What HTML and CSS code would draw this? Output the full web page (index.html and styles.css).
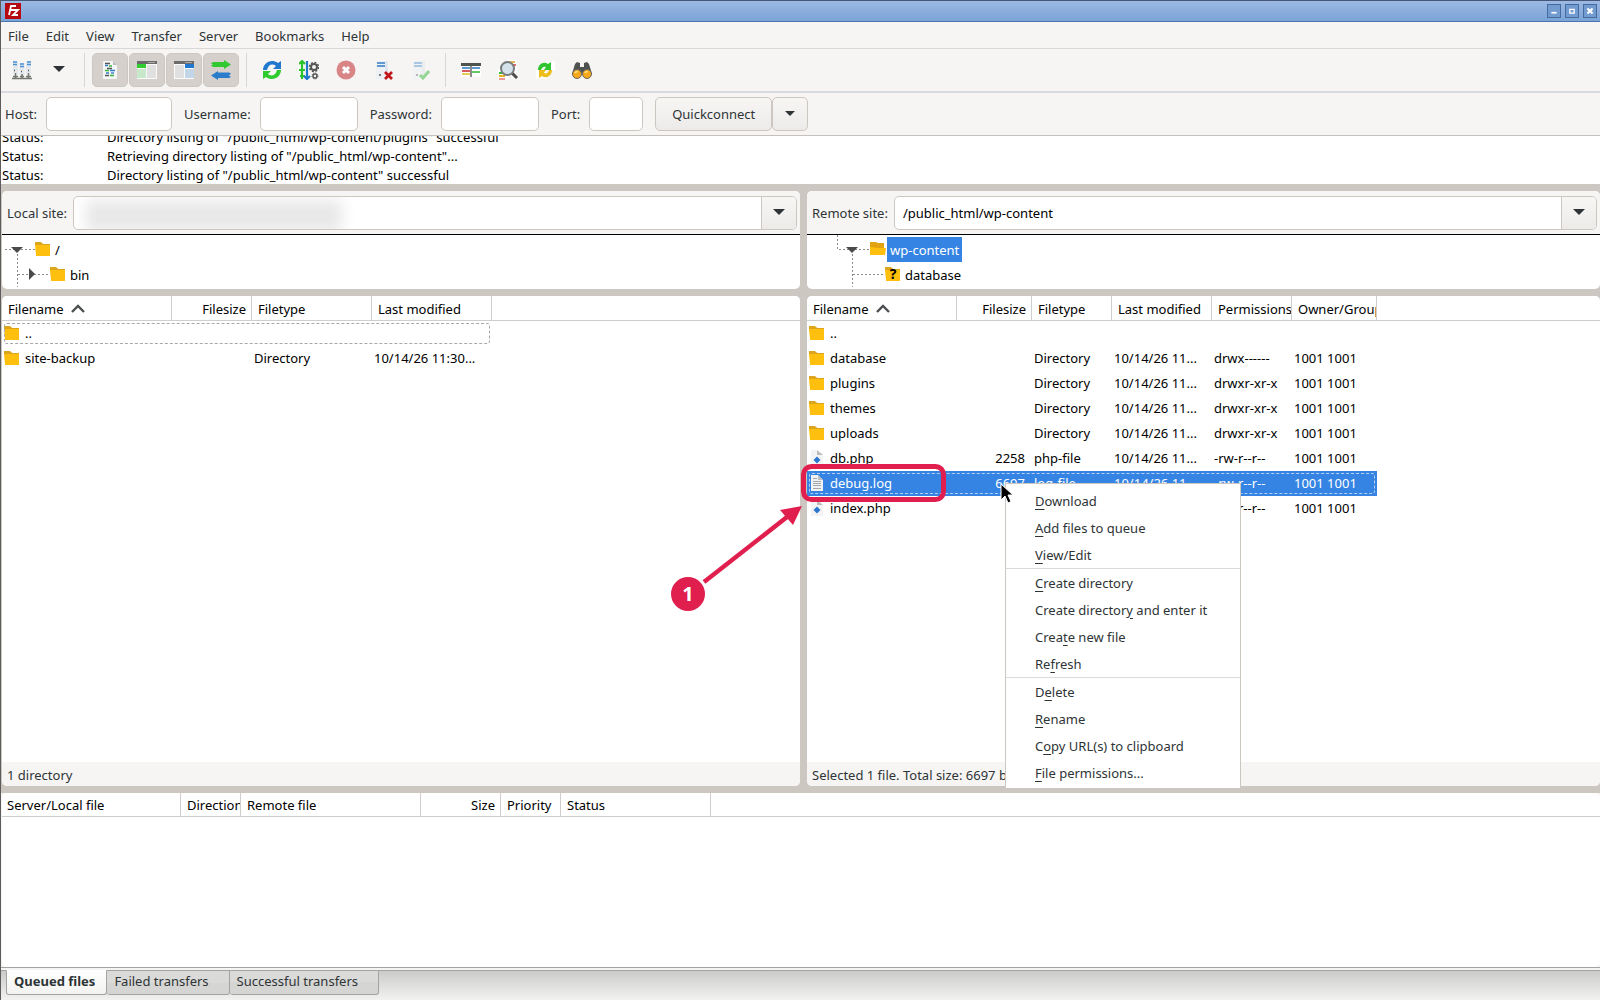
FILE: index.html
```html
<!DOCTYPE html>
<html lang="en">
<head>
<meta charset="utf-8">
<title>FileZilla</title>
<link rel="stylesheet" href="styles.css">
</head>
<body>
<svg class="defs" aria-hidden="true">
  <symbol id="folder" viewBox="0 0 16 16"><path d="M1 15V2h6l1 1h7v12z" fill="#ffbf0f"/><path d="M0 1h6l2 2h7v1H0z" fill="#dca51e"/><path d="M0 4h15v10H1z" fill="#ffbf0f"/></symbol>
  <symbol id="folder-open" viewBox="0 0 16 16"><path d="M0 1h6l2 1h6v6H0z" fill="#e2a310"/><path d="M0 14V6l8 1h8l-1 7z" fill="#ffbf0f"/></symbol>
  <symbol id="php" viewBox="0 0 16 16"><path d="M2 0h6l6 6v10H2z" fill="#f3f4f6"/><path d="M8 0v5h6z" fill="#bcbcb9"/><path d="M8 6.500l3.500 3.500L8 13.500 4.500 10z" fill="#2c77cf"/></symbol>
  <symbol id="log" viewBox="0 0 16 16"><path d="M2 0h7l5 5v11H2z" fill="#f0f1f3"/><path d="M9 0v5h5z" fill="#bcbdbd"/><path d="M4 3.500h4M4 6.500h8M4 8.500h8M4 10.500h8M4 13.500h8" stroke="#a3a8ad"/></symbol>
  <symbol id="caret" viewBox="0 0 12 7"><path d="M0 0h12L6 6z" fill="#2e3436"/></symbol>
  <symbol id="sort" viewBox="0 0 14 9"><path d="M1 8l6-6 6 6" fill="none" stroke="#4b4f50" stroke-width="2.400"/></symbol>
  <symbol id="server" viewBox="0 0 20 20"><path d="M3 1h12v18H3z" fill="#dfe5ea"/><path d="M3 1h9v18H3z" fill="#eef1f4"/><path d="M4 3h8M4 6h8" stroke="#2f7cc9" stroke-width="1.600"/><circle cx="7" cy="15" r="1" fill="#555"/></symbol>
</svg>

<div class="window">
  <header class="titlebar">
    <svg class="logo" viewBox="0 0 16 16"><path d="M0 0h16v16H0z" fill="#b50a10"/><path d="M4 12L6 3h5M5.500 7h4M8 7h5l-5 5h5" fill="none" stroke="#fff" stroke-width="1.800"/></svg>
    <div class="window-buttons">
      <button aria-label="Minimize"><svg viewBox="0 0 14 14"><path d="M4 9h6" stroke="#fff" stroke-width="2"/></svg></button>
      <button aria-label="Maximize"><svg viewBox="0 0 14 14"><path d="M4.500 5h5v4.500h-5z" fill="none" stroke="#fff" stroke-width="1.500"/></svg></button>
      <button aria-label="Close"><svg viewBox="0 0 14 14"><path d="M4 4l6 6M10 4l-6 6" stroke="#fff" stroke-width="2.400"/></svg></button>
    </div>
  </header>

  <nav class="menubar">
    <button>File</button><button>Edit</button><button>View</button><button>Transfer</button><button>Server</button><button>Bookmarks</button><button>Help</button>
  </nav>

  <div class="toolbar">
    <button class="tool" aria-label="Site Manager"><svg viewBox="0 0 20 20"><path d="M1 1h5v13H1zM7.500 3h5v12h-5zM14 1h5v13h-5z" fill="#e3e8ed"/><path d="M1 2h4M1 4.500h4M8 4h4M8 6.500h4M15 2h4M15 4.500h4" stroke="#4b91d3" stroke-width="1.400"/><path d="M3.500 13v5M10 14v4M16.500 13v5M0 18.500h20M1 16.500h5M8 16.500h4M14 16.500h5" stroke="#72766f" stroke-width="1.500"/><path d="M2 10.500h1M9 11.500h1M16 10.500h1" stroke="#555" stroke-width="1.500"/></svg></button>
    <button class="tool" aria-label="Site list"><svg class="caret"><use href="#caret"/></svg></button>
    <span class="rule"></span>
    <button class="tool on" aria-label="Message log"><svg viewBox="0 0 20 20"><path d="M3 1h10l4 4v14H3z" fill="#f4f5f6"/><path d="M13 1v4h4z" fill="#bbb"/><g stroke-width="1.400"><path d="M5 3.500h5M7 8.500h5M5 15.500h4" stroke="#555"/><path d="M5 5.500h3M10 10.500h5M6 13h3" stroke="#2f7cc9"/><path d="M9 6h3M5 10.500h4M10 15.500h4" stroke="#38b637"/><path d="M11 13h3" stroke="#2f7cc9"/></g></svg></button>
    <button class="tool on" aria-label="Local tree"><svg viewBox="0 0 20 20"><path d="M0 1h20v18H0z" fill="#fafafa"/><path d="M0 1h20v3H0z" fill="#6b6b6b"/><path d="M11 2.500h7" stroke="#aaa"/><path d="M0 4h9v4H0z" fill="#30cc30"/><path d="M0 9h9v9H0z" fill="#c8e8cc"/><path d="M10 5h9v13h-9z" fill="#e0e0e0"/></svg></button>
    <button class="tool on" aria-label="Remote tree"><svg viewBox="0 0 20 20"><path d="M0 1h20v18H0z" fill="#fafafa"/><path d="M0 1h20v3H0z" fill="#6b6b6b"/><path d="M11 2.500h7" stroke="#aaa"/><path d="M11 4h9v4h-9z" fill="#2179cf"/><path d="M11 9h9v9h-9z" fill="#c2d6e8"/><path d="M1 5h9v13H1z" fill="#e0e0e0"/></svg></button>
    <button class="tool on" aria-label="Transfer queue"><svg viewBox="0 0 20 20"><path d="M0 3.500l2-1.500H13V0l7 4.500L13 9V7H2L0 5.500 2 4.500z" fill="#32c832"/><path d="M20 13.500l-2-1H7V11l-7 4.500L7 20v-2h11l2-1-2-1.500z" fill="#2b7dcc"/></svg></button>
    <span class="rule"></span>
    <button class="tool" aria-label="Refresh"><svg viewBox="0 0 20 20"><path d="M1 10C1 3 9-2 16 3l3-2v8h-8l3-3C10 3 6 5 5 10z" fill="#2079cd"/><path d="M19 10c0 7-8 12-15 7l-3 2v-8h8l-3 3c4 3 8 1 9-4z" fill="#2ecb2e"/></svg></button>
    <button class="tool" aria-label="Process queue"><svg viewBox="0 0 20 20"><path d="M3 1v18M0 4l3-3 3 3M0 10h6M1 16h5" stroke="#2bc32b" stroke-width="2.200" fill="none"/><path d="M8 1v18M5 16l3 3 3-3" stroke="#2079cd" stroke-width="2.200" fill="none"/><circle cx="15" cy="7" r="3" fill="none" stroke="#555" stroke-width="2"/><circle cx="15" cy="7" r="4.500" fill="none" stroke="#555" stroke-width="1.500" stroke-dasharray="2 1.500"/><circle cx="16" cy="16" r="2" fill="none" stroke="#555" stroke-width="1.500"/><circle cx="16" cy="16" r="3" fill="none" stroke="#555" stroke-dasharray="1 1"/></svg></button>
    <button class="tool" aria-label="Cancel"><svg viewBox="0 0 20 20"><circle cx="10" cy="10" r="9.500" fill="#d98585"/><path d="M7 7l6 6M13 7l-6 6" stroke="#fff" stroke-width="3"/></svg></button>
    <button class="tool" aria-label="Disconnect"><svg viewBox="0 0 20 20"><use href="#server"/><path d="M12 12l7 7M19 12l-7 7" stroke="#c2161c" stroke-width="2.800"/></svg></button>
    <button class="tool" aria-label="Reconnect"><svg class="faded" viewBox="0 0 20 20"><use href="#server"/><path d="M10 15l3 3 6-7" stroke="#36b63b" stroke-width="3" fill="none"/></svg></button>
    <span class="rule"></span>
    <button class="tool" aria-label="Filter"><svg viewBox="0 0 20 20"><path d="M0 3h20v14H0z" fill="#fff"/><path d="M0 3h20v3H0z" fill="#50544f"/><path d="M10 6v11" stroke="#666" stroke-width="1.500"/><path d="M1 8h8" stroke="#2977c5" stroke-width="1.500"/><path d="M1 11h8" stroke="#c9252b" stroke-width="1.500"/><path d="M1 14h8" stroke="#e0b91f" stroke-width="1.500"/><path d="M11 8h8" stroke="#2977c5" stroke-width="1.500"/><path d="M11 12h8" stroke="#31b331" stroke-width="1.500"/></svg></button>
    <button class="tool" aria-label="Directory comparison"><svg viewBox="0 0 20 20"><path d="M10 0h9v12h-9zM0 9h10v11H0z" fill="#fff"/><path d="M11 2h6" stroke="#d89b22" stroke-width="1.500"/><path d="M14 5h4" stroke="#d33" stroke-width="1.500"/><path d="M1 13h4" stroke="#3b3" stroke-width="2"/><path d="M1 16h6" stroke="#e4b21e" stroke-width="2"/><path d="M1 19h6" stroke="#d33"/><path d="M14 13l5 5" stroke="#4b4b4b" stroke-width="3"/><circle cx="9.500" cy="8.500" r="6.500" fill="#d5e1eb" stroke="#777b7c" stroke-width="2"/></svg></button>
    <button class="tool" aria-label="Synchronized browsing"><svg viewBox="0 0 20 20"><path d="M11 1h9v9h-9zM1 10h10v9H1z" fill="#fff"/><path d="M3 10C3 4 9 1 13 4l3-2v8H9l2-3C8 6 7 8 6 10z" fill="#2dc42d"/><path d="M17 10c0 6-6 9-10 6l-3 2v-8h7l-2 3c3 1 4 0 5-3z" fill="#edbd1c"/></svg></button>
    <button class="tool" aria-label="Find files"><svg viewBox="0 0 20 20"><path d="M5 2l3 1v4h4V3l3-1 2 2 3 10-8 1-2-2-2 2-8-1L3 4z" fill="#4e5150"/><circle cx="5" cy="14" r="4.500" fill="#f7a71a" stroke="#666"/><circle cx="15" cy="14" r="4.500" fill="#f7a71a" stroke="#666"/><path d="M3 13a2 2 0 0 1 3-1M13 13a2 2 0 0 1 3-1" stroke="#ffe28a" stroke-width="1.500" fill="none"/></svg></button>
  </div>

  <form class="quickconnect">
    <label for="host">Host:</label><input id="host" class="field wide" type="text">
    <label for="user">Username:</label><input id="user" class="field" type="text">
    <label for="pass">Password:</label><input id="pass" class="field" type="password">
    <label for="port">Port:</label><input id="port" class="field port" type="text">
    <div class="connect"><button type="button" class="btn main">Quickconnect</button><button type="button" class="btn drop" aria-label="Recent servers"><svg class="caret small"><use href="#caret"/></svg></button></div>
  </form>

  <section class="log">
    <p><span>Status:</span>Directory listing of "/public_html/wp-content/plugins" successful</p>
    <p><span>Status:</span>Retrieving directory listing of "/public_html/wp-content"...</p>
    <p><span>Status:</span>Directory listing of "/public_html/wp-content" successful</p>
  </section>

  <main class="sites">
    <section class="site">
      <div class="card top">
        <div class="path"><label for="local">Local site:</label><div class="combo"><input id="local" type="text"><span class="redacted"></span><button aria-label="Local paths"><svg class="caret"><use href="#caret"/></svg></button></div></div>
        <div class="tree">
          <svg class="twigs" viewBox="0 0 60 52"><g fill="none" stroke="#8b8b8b" stroke-dasharray="2 2"><path d="M3 14.500h30M15.500 15v37M16 39.500h32"/></g><path d="M9 12h12l-6 6z" fill="#4a4a4a"/><path d="M27 33v12l6-6z" fill="#4a4a4a"/></svg>
          <div class="node root"><svg class="ico"><use href="#folder"/></svg><span>/</span></div>
          <div class="node child"><svg class="ico"><use href="#folder"/></svg><span>bin</span></div>
        </div>
      </div>
      <div class="card files">
        <div class="list">
          <table class="local">
            <colgroup><col class="w170"><col class="w80"><col class="w120"><col class="w120"></colgroup>
            <thead><tr><th>Filename<svg class="sort"><use href="#sort"/></svg></th><th class="num">Filesize</th><th>Filetype</th><th>Last modified</th></tr></thead>
            <tbody>
              <tr class="focus"><td><svg class="ico"><use href="#folder"/></svg>..</td><td></td><td></td><td></td></tr>
              <tr><td><svg class="ico"><use href="#folder"/></svg>site-backup</td><td></td><td>Directory</td><td>10/14/26 11:30...</td></tr>
            </tbody>
          </table>
        </div>
        <div class="status">1 directory</div>
      </div>
    </section>

    <section class="site">
      <div class="card top">
        <div class="path"><label for="remote">Remote site:</label><div class="combo"><input id="remote" type="text" value="/public_html/wp-content"><button aria-label="Remote paths"><svg class="caret"><use href="#caret"/></svg></button></div></div>
        <div class="tree remote">
          <svg class="twigs" viewBox="0 0 60 52"><g fill="none" stroke="#8b8b8b" stroke-dasharray="2 2"><path d="M.500 0v14.500h33M15.500 15v37M16 39.500h32"/></g><path d="M9 12h12l-6 6z" fill="#4a4a4a"/></svg>
          <div class="node root"><svg class="ico"><use href="#folder-open"/></svg><span class="picked">wp-content</span></div>
          <div class="node child"><span class="unknown"><svg class="ico"><use href="#folder"/></svg><b>?</b></span><span>database</span></div>
        </div>
      </div>
      <div class="card files">
        <div class="list">
          <table class="server">
            <colgroup><col class="w150"><col class="w75"><col class="w80"><col class="w100"><col class="w80"><col class="w85"></colgroup>
            <thead><tr><th>Filename<svg class="sort"><use href="#sort"/></svg></th><th class="num">Filesize</th><th>Filetype</th><th>Last modified</th><th>Permissions</th><th>Owner/Group</th></tr></thead>
            <tbody>
              <tr><td><svg class="ico"><use href="#folder"/></svg>..</td><td></td><td></td><td></td><td></td><td></td></tr>
              <tr><td><svg class="ico"><use href="#folder"/></svg>database</td><td></td><td>Directory</td><td>10/14/26 11...</td><td>drwx------</td><td>1001 1001</td></tr>
              <tr><td><svg class="ico"><use href="#folder"/></svg>plugins</td><td></td><td>Directory</td><td>10/14/26 11...</td><td>drwxr-xr-x</td><td>1001 1001</td></tr>
              <tr><td><svg class="ico"><use href="#folder"/></svg>themes</td><td></td><td>Directory</td><td>10/14/26 11...</td><td>drwxr-xr-x</td><td>1001 1001</td></tr>
              <tr><td><svg class="ico"><use href="#folder"/></svg>uploads</td><td></td><td>Directory</td><td>10/14/26 11...</td><td>drwxr-xr-x</td><td>1001 1001</td></tr>
              <tr><td><svg class="ico"><use href="#php"/></svg>db.php</td><td class="num">2258</td><td>php-file</td><td>10/14/26 11...</td><td>-rw-r--r--</td><td>1001 1001</td></tr>
              <tr class="focus selected"><td><svg class="ico"><use href="#log"/></svg>debug.log</td><td class="num">6697</td><td>log-file</td><td>10/14/26 11...</td><td>-rw-r--r--</td><td>1001 1001</td></tr>
              <tr><td><svg class="ico"><use href="#php"/></svg>index.php</td><td class="num">28</td><td>php-file</td><td>10/14/26 11...</td><td>-rw-r--r--</td><td>1001 1001</td></tr>
            </tbody>
          </table>
        </div>
        <div class="status">Selected 1 file. Total size: 6697 bytes</div>
      </div>

      <div class="context" role="menu">
        <button><u>D</u>ownload</button>
        <button><u>A</u>dd files to queue</button>
        <button><u>V</u>iew/Edit</button>
        <hr>
        <button><u>C</u>reate directory</button>
        <button>Create director<u>y</u> and enter it</button>
        <button>Crea<u>t</u>e new file</button>
        <button>Re<u>f</u>resh</button>
        <hr>
        <button>D<u>e</u>lete</button>
        <button><u>R</u>ename</button>
        <button>C<u>o</u>py URL(s) to clipboard</button>
        <button><u>F</u>ile permissions...</button>
      </div>
      <svg class="pointer" viewBox="0 0 14 22"><path d="M1 1v16l4-4 3 7 3-1.500-3-6.500h5z" fill="#000" stroke="#fff"/></svg>
      <svg class="callout" viewBox="0 0 280 150"><rect x="133.500" y="2.500" width="140" height="33" rx="8" fill="none" stroke="#e01f4f" stroke-width="5"/><path d="M34 118L117 53" stroke="#e01f4f" stroke-width="4.500"/><path d="M132 42l-9 19-13-15z" fill="#e01f4f"/><circle cx="18" cy="130" r="17" fill="#e01f4f"/><text x="18" y="137" text-anchor="middle">1</text></svg>
    </section>
  </main>

  <section class="card queue">
    <table>
      <colgroup><col class="w179"><col class="w60"><col class="w180"><col class="w80"><col class="w60"><col class="w150"></colgroup>
      <thead><tr><th>Server/Local file</th><th>Direction</th><th>Remote file</th><th class="num">Size</th><th>Priority</th><th>Status</th></tr></thead>
    </table>
  </section>

  <footer class="tabs">
    <button class="tab active">Queued files</button><button class="tab">Failed transfers</button><button class="tab">Successful transfers</button>
  </footer>
</div>
</body>
</html>
```
FILE: styles.css
```css
* { box-sizing: border-box; }
body { margin: 0; font: 13px/18px "Noto Sans", sans-serif; color: #2e3436; }
button, input { font: inherit; color: inherit; }
button { margin: 0; padding: 0; border: 0; background: none; }
p { margin: 0; }
svg { display: block; flex: none; }
.defs { position: absolute; width: 0; height: 0; }

.window {
  display: flex;
  flex-direction: column;
  min-height: 100vh;
  border-left: 1px solid #5c5c5c;
  background: #f6f5f4;
  overflow: hidden;
}

.titlebar {
  display: flex;
  align-items: center;
  justify-content: space-between;
  height: 22px;
  padding: 0 3px 0 4px;
  border-top: 1px solid #46587a;
  border-bottom: 1px solid #4a75ae;
  background: linear-gradient(#9db9e4, #7aa3d6);
}
.logo { width: 16px; height: 16px; }
.window-buttons { display: flex; gap: 4px; }
.window-buttons button { width: 14px; height: 14px; border: 1px solid #456a9e; background: #729bd0; }
.window-buttons svg { width: 12px; height: 12px; }

.menubar {
  display: flex;
  align-items: center;
  gap: 17px;
  height: 27px;
  padding: 2px 7px 0;
  border-bottom: 1px solid #d9d8d6;
}

.toolbar {
  display: flex;
  align-items: center;
  gap: 1px;
  height: 44px;
  padding: 0 3px 1px;
  border-bottom: 2px solid #d8dadd;
}
.tool { display: flex; align-items: center; justify-content: center; width: 36px; height: 34px; border-radius: 5px; }
.tool svg { width: 20px; height: 20px; }
.tool.on { background: #d5d0cc; border: 1px solid #cdc7c2; }
.tool svg.caret, .caret { width: 12px; height: 7px; }
.caret.small { width: 10px; height: 6px; }
.faded { opacity: .5; }
.rule { width: 1px; height: 34px; margin: 0 6px; background: #d9d6d3; }

.quickconnect {
  display: flex;
  align-items: center;
  height: 43px;
  padding-left: 4px;
  border-bottom: 1px solid #c4c0bc;
}
.quickconnect label { margin-right: 9px; }
.field { width: 98px; height: 34px; margin-right: 12px; padding: 0 8px; border: 1px solid #cdc7c2; border-radius: 5px; background: #fff; }
.field.wide { width: 126px; }
.field.port { width: 54px; }
.connect { display: flex; }
.btn { height: 34px; border: 1px solid #cdc7c2; border-radius: 5px; background: linear-gradient(#f7f6f5, #edebe9); }
.btn.main { width: 117px; }
.btn.drop { display: flex; align-items: center; justify-content: center; width: 36px; }

.log {
  display: flex;
  flex-direction: column;
  justify-content: flex-end;
  height: 48px;
  padding-left: 1px;
  overflow: hidden;
  background: #fff;
  color: #000;
}
.log p { flex: none; display: flex; height: 19px; padding-top: 1px; line-height: 19px; }
.log span { width: 105px; }

.sites {
  display: grid;
  grid-template-columns: 799fr 793fr;
  gap: 7px;
  flex: 1;
  padding: 7px 0;
  background: #cdc7c2;
}
.site { position: relative; display: flex; flex-direction: column; gap: 7px; min-width: 0; }
.site:first-child { padding-left: 1px; }
.card { border-radius: 5px; background: #fff; overflow: hidden; }
.path { display: flex; align-items: center; gap: 6px; height: 44px; padding: 0 3px 0 5px; border-bottom: 1px solid #000; background: #f6f5f4; }
.combo { position: relative; display: flex; flex: 1; height: 34px; border: 1px solid #cdc7c2; border-radius: 5px; background: #fff; overflow: hidden; }
.combo input { flex: 1; min-width: 0; padding: 0 8px; border: 0; background: none; color: #000; }
.combo button { display: flex; align-items: center; justify-content: center; width: 35px; border-left: 1px solid #cdc7c2; background: linear-gradient(#f7f6f5, #edebe9); }
.redacted { position: absolute; left: 12px; top: 3px; width: 256px; height: 32px; background: #e8e8e8; filter: blur(7px); }

.tree { position: relative; height: 54px; padding-top: 2px; color: #000; }
.remote { padding-left: 30px; }
.twigs { position: absolute; left: 0; top: 0; width: 60px; height: 52px; }
.remote .twigs { left: 30px; }
.node { position: relative; display: flex; align-items: center; gap: 2px; height: 25px; padding-left: 33px; }
.node.child { padding-left: 48px; }
.node span { padding: 2px 3px 0 2px; line-height: 23px; }
.node .ico { margin-bottom: 1px; }
.ico { width: 16px; height: 16px; }
.node .unknown { position: relative; padding: 0; }
.unknown b { position: absolute; inset: 0; font-size: 14px; line-height: 16px; text-align: center; }
.node .picked { padding: 2px 3px 0; margin-left: -1px; background: #3584e4; color: #fff; }

.files { display: flex; flex-direction: column; flex: 1; }
.list { flex: 1; background: linear-gradient(#d0cecc, #d0cecc) 0 24px / 100% 1px no-repeat #fff; }
.status { height: 24px; padding: 4px 5px 2px; background: #f6f5f4; white-space: nowrap; }

table { table-layout: fixed; border-collapse: separate; border-spacing: 0; color: #000; }
.local { width: 490px; }
.server { width: 570px; }
.queue table { width: 709px; }
.w60 { width: 60px; }
.w75 { width: 75px; }
.w80 { width: 80px; }
.w85 { width: 85px; }
.w100 { width: 100px; }
.w120 { width: 120px; }
.w150 { width: 150px; }
.w170 { width: 170px; }
.w179 { width: 179px; }
.w180 { width: 180px; }
th { height: 25px; padding: 1px 5px 0 6px; border-right: 1px solid #d0cecc; border-bottom: 1px solid #d0cecc; font-weight: 400; text-align: left; white-space: nowrap; overflow: hidden; }
th:nth-child(n+5) { padding-right: 0; }
td { height: 25px; padding: 0 2px 2px; white-space: nowrap; overflow: hidden; }
.num { text-align: right; }
td.num { padding-right: 7px; }
.sort { display: inline-block; width: 14px; height: 9px; margin-left: 7px; vertical-align: 1px; }
td .ico { float: left; margin: 1px 5px 0 0; }
.focus { position: relative; }
.focus td:first-child::after { content: ""; position: absolute; inset: 2px; border: 1px dashed #aaa8a6; border-radius: 3px; }
.selected td { background: #3584e4; color: #fff; }
.selected td:first-child::after { border-color: #b5d0f2; }

.context {
  position: absolute;
  left: 198px;
  top: 292px;
  width: 236px;
  padding: 3px 0 2px;
  border: 1px solid #cdc7c2;
  background: #fff;
}
.context button { display: block; width: 100%; height: 27px; padding-left: 29px; text-align: left; }
.context u { text-underline-offset: 3px; }
.context hr { height: 1px; margin: 0; border: 0; background: #dddbd9; }
.pointer { position: absolute; left: 193px; top: 292px; width: 14px; height: 22px; }
.callout { position: absolute; left: -137px; top: 273px; width: 280px; height: 150px; }
.callout text { fill: #fff; font-weight: 700; font-size: 20px; }

.queue { height: 174px; margin-left: 1px; background: linear-gradient(#d0cecc, #d0cecc) 0 23px / 100% 1px no-repeat #fff; }
.queue th { height: 24px; padding-left: 5px; }
.queue th + th { padding-left: 6px; }
.queue th:nth-child(2) { padding-right: 0; }

.tabs {
  display: flex;
  align-items: flex-start;
  height: 33px;
  padding: 0 5px;
  border-top: 1px solid #a3a3a0;
  background: linear-gradient(#f6f5f4 2px, #a3a3a0 2px, #a3a3a0 3px, #cbcbca 3px, #f2f2f1);
}
.tab { height: 25px; margin-top: 2px; padding: 0 20px 4px 7px; border: 1px solid #a3a3a0; border-left-width: 0; border-radius: 0 0 3px 3px; background: linear-gradient(#dadad9 50%, #d5d5d3 50%); }
.tab.active { padding-right: 11px; border-left-width: 1px; border-top-color: #fff; background: linear-gradient(#fff, #f2f2f1); font-weight: 700; }
```
